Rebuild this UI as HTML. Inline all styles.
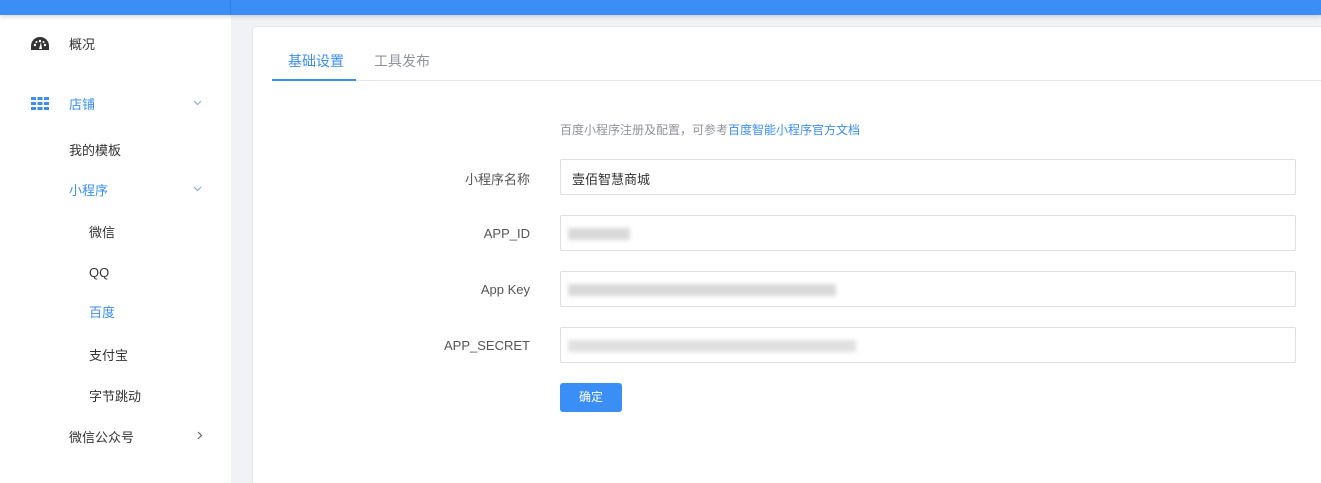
<!DOCTYPE html>
<html><head><meta charset="utf-8"><style>
*{margin:0;padding:0;box-sizing:border-box}
html,body{width:1321px;height:483px;overflow:hidden}
body{background:#f0f2f5;font-family:"Liberation Sans","Noto Sans CJK SC",sans-serif;font-size:13px;color:#333;position:relative}
.top{position:absolute;left:0;top:0;width:1321px;height:15px;background:#3a8ef6;box-shadow:0 2px 4px rgba(0,0,0,.15);z-index:2}
.top .sep{position:absolute;left:230px;top:0;width:1px;height:15px;background:#2f7de0}
.side{position:absolute;left:0;top:0;width:231px;height:483px;background:#fff}
.it{position:absolute;white-space:nowrap}
.card{position:absolute;left:252px;top:26px;width:1080px;height:470px;background:#fff;border:1px solid #e4e7ed;border-radius:4px}
.abs{position:absolute}
.inp{position:absolute;left:560px;width:736px;height:36px;border:1px solid #dcdfe6;border-radius:2px;background:#fff}
.lbl{position:absolute;width:200px;left:330px;text-align:right;color:#555;font-size:13px}
.blur{position:absolute;height:12px;background:#d9d9d9;filter:blur(2px);top:12px}
</style></head><body>
<div class="top"><div class="sep"></div></div>
<div class="side">
 <svg class="it" style="left:31px;top:37px" width="18" height="14" viewBox="0 0 18 14"><path d="M9 0A9 9 0 0 0 0 9v4h18V9A9 9 0 0 0 9 0z" fill="#333"/><circle cx="4" cy="8" r="1.2" fill="#fff"/><circle cx="9" cy="4" r="1.2" fill="#fff"/><circle cx="14" cy="8" r="1.2" fill="#fff"/><circle cx="5.5" cy="5" r="1" fill="#fff"/><circle cx="12.5" cy="5" r="1" fill="#fff"/><path d="M8 12l2-7 1 7z" fill="#fff"/></svg>
 <div class="it" style="left:69px;top:34px;color:#333">概况</div>
 <svg class="it" style="left:31px;top:97px" width="18" height="13"><g fill="#3a8ef6"><rect x="0" y="0" width="5" height="3"/><rect x="6.5" y="0" width="5" height="3"/><rect x="13" y="0" width="5" height="3"/><rect x="0" y="5" width="5" height="3"/><rect x="6.5" y="5" width="5" height="3"/><rect x="13" y="5" width="5" height="3"/><rect x="0" y="10" width="5" height="3"/><rect x="6.5" y="10" width="5" height="3"/><rect x="13" y="10" width="5" height="3"/></g></svg>
 <div class="it" style="left:69px;top:94px;color:#3a8ef6">店铺</div>
 <svg class="it" style="left:193px;top:100px" width="9" height="6"><path d="M1 1l3.5 3.5L8 1" stroke="#8aa9e8" fill="none" stroke-width="1.2"/></svg>
 <div class="it" style="left:69px;top:140px">我的模板</div>
 <div class="it" style="left:69px;top:180px;color:#3a8ef6">小程序</div>
 <svg class="it" style="left:193px;top:186px" width="9" height="6"><path d="M1 1l3.5 3.5L8 1" stroke="#8aa9e8" fill="none" stroke-width="1.2"/></svg>
 <div class="it" style="left:89px;top:222px">微信</div>
 <div class="it" style="left:89px;top:265px">QQ</div>
 <div class="it" style="left:89px;top:302px;color:#3a8ef6">百度</div>
 <div class="it" style="left:89px;top:345px">支付宝</div>
 <div class="it" style="left:89px;top:386px">字节跳动</div>
 <div class="it" style="left:69px;top:427px">微信公众号</div>
 <svg class="it" style="left:197px;top:431px" width="6" height="9"><path d="M1 1l3.5 3.5L1 8" stroke="#666" fill="none" stroke-width="1.2"/></svg>
</div>
<div class="card"></div>
<div class="abs" style="left:288px;top:51px;color:#3a8ef6;font-size:14px">基础设置</div>
<div class="abs" style="left:374px;top:51px;color:#909399;font-size:14px">工具发布</div>
<div class="abs" style="left:272px;top:80px;width:1049px;height:1px;background:#e4e7ed"></div>
<div class="abs" style="left:272px;top:79px;width:84px;height:2px;background:#3a8ef6"></div>
<div class="abs" style="left:560px;top:121px;color:#909399;font-size:12px">百度小程序注册及配置，可参考<span style="color:#3a8ef6">百度智能小程序官方文档</span></div>
<div class="lbl" style="top:169px">小程序名称</div>
<div class="inp" style="top:159px"><div class="abs" style="left:11px;top:9px;font-size:13px;color:#333">壹佰智慧商城</div></div>
<div class="lbl" style="top:226px">APP_ID</div>
<div class="inp" style="top:215px"><div class="blur" style="left:7px;width:62px"></div></div>
<div class="lbl" style="top:282px">App Key</div>
<div class="inp" style="top:271px"><div class="blur" style="left:7px;width:268px"></div></div>
<div class="lbl" style="top:338px">APP_SECRET</div>
<div class="inp" style="top:327px"><div class="blur" style="left:7px;width:288px;background:#e0e0e0"></div></div>
<div class="abs" style="left:560px;top:383px;width:62px;height:29px;background:#3a8ef6;border-radius:3px;color:#fff;font-size:12px;text-align:center;line-height:29px">确定</div>
</body></html>
